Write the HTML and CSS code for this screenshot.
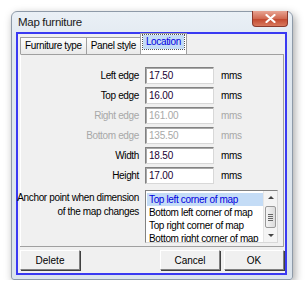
FILE: index.html
```html
<!DOCTYPE html>
<html lang="en">
<head>
  <meta charset="UTF-8" />
  <title>Map furniture</title>
  <link rel="stylesheet" href="styles.css">
</head>
<body>
  <div class="window">
    <div class="titlebar">
      <span class="title">Map furniture</span>
      <div class="close">
        <svg width="11" height="9" viewBox="0 0 11 9"><path d="M1.5 1 L9.5 8 M9.5 1 L1.5 8" stroke="#fff" stroke-width="2.2" stroke-linecap="round"/></svg>
      </div>
    </div>
    <div class="client">
      <div class="tabs">
        <div class="tab">Furniture type</div>
        <div class="tab">Panel style</div>
        <div class="tab active"><span>Location</span></div>
      </div>
      <div class="panel">
        <div class="form">
          <div class="row"><label>Left edge</label><input class="field" value="17.50"><span class="unit">mms</span></div>
          <div class="row"><label>Top edge</label><input class="field" value="16.00"><span class="unit">mms</span></div>
          <div class="row disabled"><label>Right edge</label><input class="field" value="161.00" disabled><span class="unit">mms</span></div>
          <div class="row disabled"><label>Bottom edge</label><input class="field" value="135.50" disabled><span class="unit">mms</span></div>
          <div class="row"><label>Width</label><input class="field" value="18.50"><span class="unit">mms</span></div>
          <div class="row"><label>Height</label><input class="field" value="17.00"><span class="unit">mms</span></div>
        </div>
        <div class="anchor">
          <div class="anchor-label">
            <span>Anchor point when dimension</span>
            <span>of the map changes</span>
          </div>
          <div class="listbox">
            <ul class="items">
              <li class="selected">Top left corner of map</li>
              <li>Bottom left corner of map</li>
              <li>Top right corner of map</li>
              <li>Bottom right corner of map</li>
            </ul>
            <div class="scrollbar">
              <div class="arrow up"></div>
              <div class="thumb"><i></i><i></i><i></i><i></i></div>
              <div class="arrow down"></div>
            </div>
          </div>
        </div>
      </div>
      <div class="buttons">
        <button class="btn">Delete</button>
        <span class="spacer"></span>
        <button class="btn">Cancel</button>
        <button class="btn">OK</button>
      </div>
    </div>
  </div>
</body>
</html>
```

FILE: styles.css
```css
body {
  margin: 0;
  background-color: #fff;
  font-family: "Liberation Sans", Arial, sans-serif;
  font-size: 10px;
  letter-spacing: -0.35px;
  color: #000;
}
.window {
  margin: 11px 0 0 11px;
  width: 280px;
  height: 267px;
  border: 1px solid #8e9aa8;
  border-radius: 6px 6px 3px 3px;
  background: linear-gradient(#eaf0f6, #dfe7ef 40px, #dbe4ed);
  box-shadow: 2px 3px 8px rgba(0,0,0,0.35);
  display: flex;
  flex-direction: column;
}
.titlebar {
  height: 20px;
  display: flex;
  align-items: flex-start;
  padding-left: 6px;
  position: relative;
}
.title {
  font-size: 11.5px;
  letter-spacing: -0.3px;
  margin-top: 4px;
  color: #1a1a1a;
}
.close {
  position: absolute;
  right: 4px;
  top: -1px;
  width: 34px;
  height: 15px;
  border: 1px solid #8b3a2e;
  border-top: none;
  border-radius: 0 0 4px 4px;
  background: linear-gradient(#e8a493, #d16a52 50%, #c0452c 51%, #d9795e);
  display: flex;
  align-items: center;
  justify-content: center;
}
.client {
  margin: 0 5px 4px 4px;
  flex: 1;
  border: 2px solid #3a3af2;
  background-color: #f0f0f0;
  display: flex;
  flex-direction: column;
  padding: 2px 1px 3px 2px;
}
.tabs {
  display: flex;
  height: 18px;
  align-items: flex-end;
}
.tab {
  height: 16px;
  line-height: 16px;
  padding: 0 4px;
  border: 1px solid #a0a0a0;
  border-bottom: none;
  background: linear-gradient(#fcfcfc, #eaeaea);
  margin-right: -1px;
}
.tab.active {
  height: 18px;
  padding: 1px 2px;
  background: #fff;
  color: #0000e0;
  position: relative;
  z-index: 1;
}
.tab.active span {
  display: block;
  height: 14px;
  line-height: 14px;
  padding: 0 3px;
  background-color: #c4dcf6;
  outline: 1px dotted #555;
}
.panel {
  flex: 1;
  border-top: 1px solid #a0a0a0;
  border-right: 1px solid #a0a0a0;
  border-left: 1px solid #fff;
  padding-top: 12px;
}
.form {
  display: flex;
  flex-direction: column;
  gap: 3px;
}
.row {
  display: flex;
  align-items: center;
  height: 17px;
}
.row label {
  width: 118px;
  text-align: right;
  padding-right: 6px;
}
.field {
  width: 61px;
  height: 11px;
  padding: 2px 3px;
  border: 1px solid;
  border-color: #828282 #d8d8d8 #d8d8d8 #828282;
  box-shadow: inset 1px 1px 0 #a8a8a8;
  font-family: "Liberation Sans", Arial, sans-serif;
  font-size: 10px;
  letter-spacing: -0.2px;
  color: #1a0033;
  background: #fff;
}
.unit {
  margin-left: 7px;
}
.row.disabled {
  color: #a8a8a8;
}
.row.disabled .field {
  color: #a8a8a8;
  background: #fff;
}
.anchor {
  display: flex;
  margin-top: 6px;
}
.anchor-label {
  width: 118px;
  padding-right: 6px;
  display: flex;
  flex-direction: column;
  align-items: flex-end;
  white-space: nowrap;
  line-height: 14px;
  padding-top: 1px;
}
.listbox {
  width: 131px;
  height: 51px;
  border: 1px solid;
  border-color: #828282 #d8d8d8 #d8d8d8 #828282;
  background: #fff;
  display: flex;
  overflow: hidden;
}
.items {
  list-style: none;
  margin: 0;
  padding: 2px 0 0 1px;
  flex: 1;
}
.items li {
  height: 13px;
  line-height: 13px;
  padding-left: 2px;
  white-space: nowrap;
}
.items li.selected {
  background-color: #c4dcf6;
  color: #0000e0;
}
.scrollbar {
  width: 13px;
  background: #f4f4f4;
  border-left: 1px solid #e6e6e6;
  display: flex;
  flex-direction: column;
  align-items: center;
}
.arrow {
  height: 14px;
  width: 13px;
  position: relative;
}
.arrow::after {
  content: "";
  position: absolute;
  left: 4px;
  border-left: 3px solid transparent;
  border-right: 3px solid transparent;
}
.arrow.up::after {
  top: 5px;
  border-bottom: 3px solid #444;
}
.arrow.down::after {
  top: 6px;
  border-top: 3px solid #444;
}
.thumb {
  width: 9px;
  height: 13px;
  border: 1px solid #9a9a9a;
  border-radius: 2px;
  background: linear-gradient(90deg, #f4f4f4, #dcdcdc);
  display: flex;
  flex-direction: column;
  align-items: center;
  justify-content: center;
  gap: 1px;
  margin-top: 1px;
  flex: 1;
}
.thumb i {
  display: block;
  width: 5px;
  height: 1px;
  background: #666;
}
.buttons {
  display: flex;
  gap: 4px;
  border-top: 1px solid #a0a0a0;
  padding-top: 3px;
}
.spacer {
  flex: 1;
}
.btn {
  width: 60px;
  height: 20px;
  border: 1px solid;
  border-color: #fff #808080 #808080 #fff;
  box-shadow: 1px 1px 0 #404040;
  background: #f0f0f0;
  font-family: "Liberation Sans", Arial, sans-serif;
  font-size: 10px;
  color: #000;
  padding: 0;
}
```
